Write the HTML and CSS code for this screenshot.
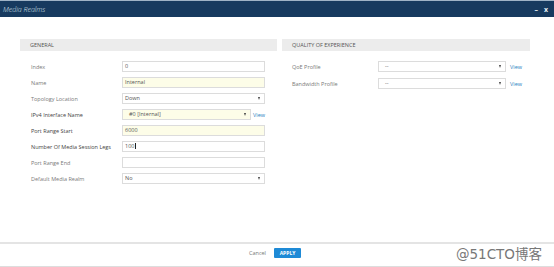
FILE: index.html
```html
<!DOCTYPE html>
<html lang="en">
<head>
  <meta charset="utf-8"/>
  <title>Media Realms</title>
  <link rel="stylesheet" href="styles.css">
</head>
<body>
  <div class="titlebar">
    <span class="title">Media Realms</span>
    <span class="win-btns"><span>&ndash;</span><span>x</span></span>
  </div>

  <div class="content">
    <div class="column left">
      <div class="group-head">GENERAL</div>
      <div class="form">
        <label>Index</label><div class="field">0</div><span></span>
        <label>Name</label><div class="field req">Internal</div><span></span>
        <label>Topology Location</label><div class="field sel">Down<i class="caret"></i></div><span></span>
        <label class="dark">IPv4 Interface Name</label><div class="field req sel short indent">#0 [Internal]<i class="caret"></i></div><a class="view">View</a>
        <label class="dark">Port Range Start</label><div class="field req">6000</div><span></span>
        <label class="dark">Number Of Media Session Legs</label><div class="field">100<i class="cursor"></i></div><span></span>
        <label>Port Range End</label><div class="field"></div><span></span>
        <label>Default Media Realm</label><div class="field sel">No<i class="caret"></i></div><span></span>
      </div>
    </div>
    <div class="column right">
      <div class="group-head">QUALITY OF EXPERIENCE</div>
      <div class="form qoe">
        <label>QoE Profile</label><div class="field sel indent">--<i class="caret"></i></div><a class="view">View</a>
        <label>Bandwidth Profile</label><div class="field sel indent">--<i class="caret"></i></div><a class="view">View</a>
      </div>
    </div>
  </div>

  <div class="footer">
    <a class="cancel">Cancel</a>
    <button class="apply">APPLY</button>
    <span class="mark">@51CTO博客</span>
  </div>
</body>
</html>
```

FILE: styles.css
```css
body { margin:0; width:554px; height:267px; overflow:hidden; background:#fff; font-family:"Open Sans", Arial, sans-serif; color:#666; position:relative; }

.titlebar { height:17px; background:#173a5f; border-top:1px solid #9fb3c6; box-sizing:border-box; display:flex; justify-content:space-between; align-items:center; padding:0 6px 0 3px; }
.title { color:#dfe7f0; font-size:7px; font-style:italic; font-weight:300; }
.win-btns { color:#e8eef5; font-size:7px; font-weight:bold; display:flex; gap:6px; }

.content { height:225px; display:flex; padding:22px 0 0 20px; box-sizing:border-box; }
.column.left { width:257px; }
.column.right { width:248px; margin-left:5px; }

.group-head { height:12px; background:#ececec; font-size:5.5px; color:#555; line-height:12px; padding-left:10px; margin-bottom:10px; }

.form { display:grid; grid-template-columns:91px 143px 23px; row-gap:5px; align-items:center; padding-left:11px; }
.form.qoe { grid-template-columns:86px 128px 34px; padding-left:10px; row-gap:6px; }

label { font-size:5.5px; color:#7a7a7a; }
label.dark { color:#444; }

.field { height:11px; box-sizing:border-box; border:1px solid #dcdcdc; background:#fff; font-size:5.5px; color:#555; line-height:9px; padding-left:2px; position:relative; }
.field.req { background:#fdfde8; }
.field.short { width:129px; }
.field.indent { padding-left:6px; }
.caret { position:absolute; right:4px; top:3px; width:0; height:0; border-left:1.5px solid transparent; border-right:1.5px solid transparent; border-top:3px solid #444; }
.cursor { display:inline-block; width:0.6px; height:6px; background:#222; vertical-align:-1px; margin-left:0.5px; }

.view { font-size:5.5px; color:#2e7fc1; margin-left:-12px; }
.qoe .view { margin-left:4px; }

.footer { height:25px; border-top:2px solid #e4e4e4; box-sizing:border-box; display:flex; justify-content:center; align-items:center; gap:8px; padding-bottom:4px; padding-right:4px; border-bottom:1px solid #ddd; }
.cancel { font-size:5.5px; color:#777; }
.apply { width:27px; height:10px; padding:0; border:none; border-radius:1px; background:#1e8ad6; color:#fff; font-family:"Open Sans", Arial, sans-serif; font-size:5px; font-weight:bold; }
.mark { position:absolute; right:12px; bottom:4px; font-family:"DejaVu Sans", "Noto Sans CJK SC", sans-serif; font-size:13.5px; color:#777; }
```
